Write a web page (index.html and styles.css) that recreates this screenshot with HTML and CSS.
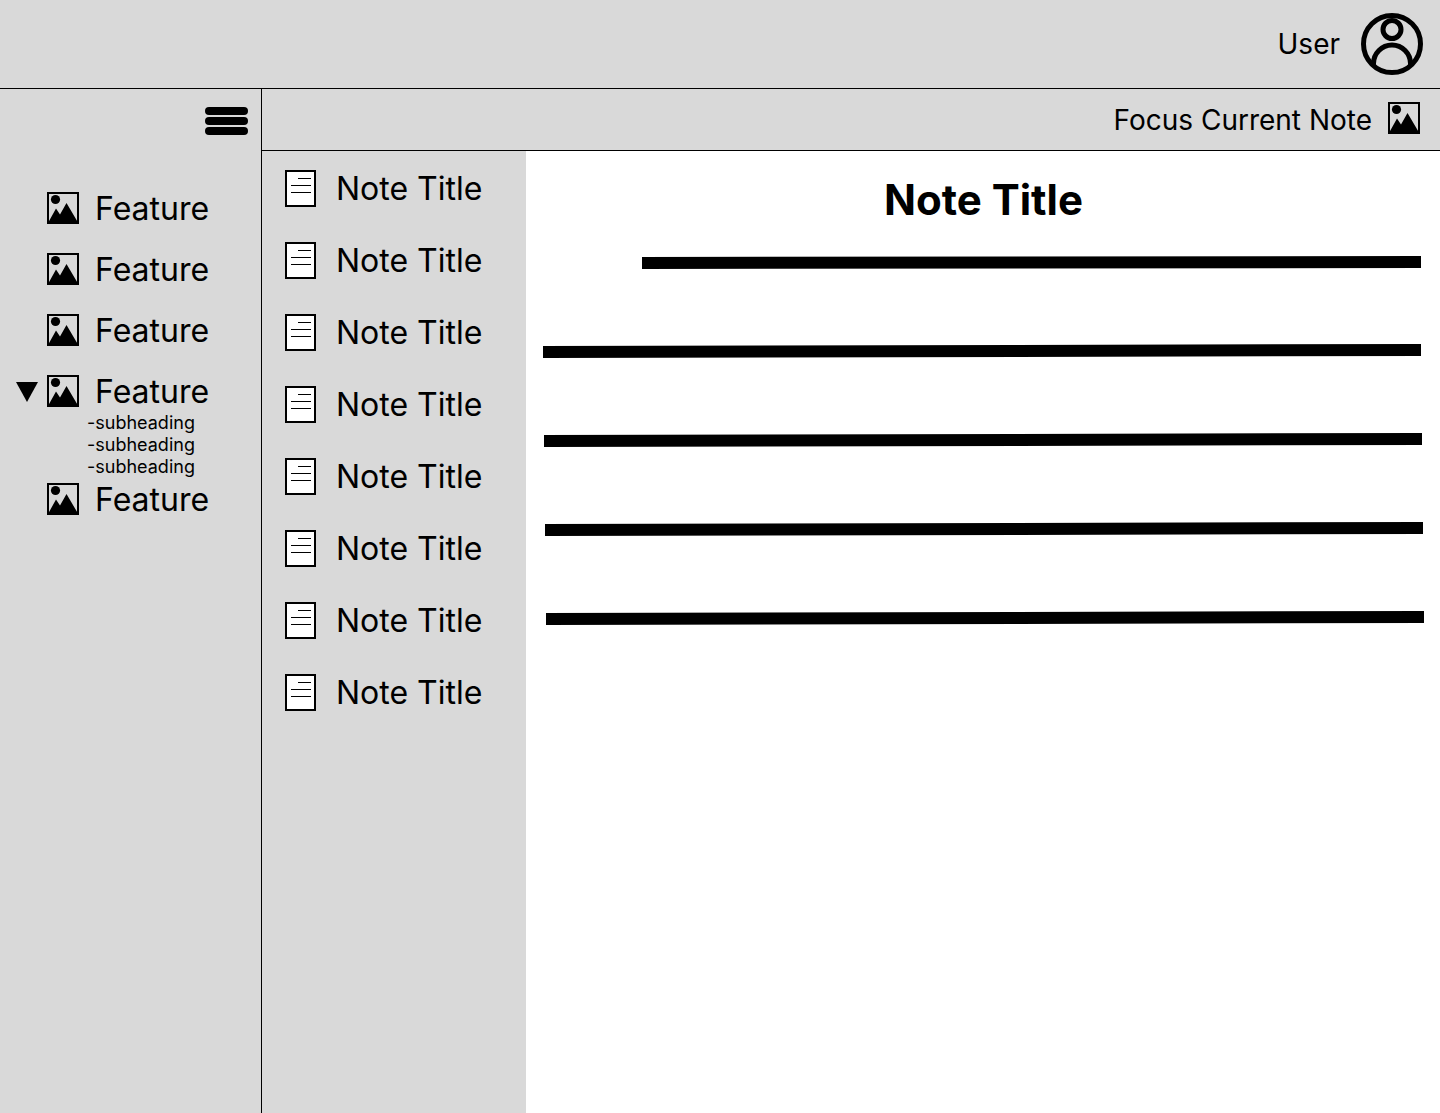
FILE: index.html
```html
<!DOCTYPE html>
<html lang="en">
<head>
<meta charset="utf-8">
<meta name="viewport" content="width=device-width, initial-scale=1">
<title>Notes</title>
<link rel="stylesheet" href="styles.css">
</head>
<body>
<svg class="symbols" aria-hidden="true">
  <symbol id="picture" viewBox="0 0 32 32">
    <rect x="1" y="1" width="30" height="30" fill="none" stroke="#000" stroke-width="2"/>
    <circle cx="8.500" cy="7.500" r="4.600"/>
    <path d="M1.500 30 9 16.500l4 6L19.500 11 31 30.500z"/>
  </symbol>
  <symbol id="page" viewBox="0 0 31 37">
    <rect x="1" y="1" width="29" height="35" fill="#fff" stroke="#000" stroke-width="2"/>
    <path d="M13 8.500h13M6 15.500h20M6 22.500h20" fill="none" stroke="#000"/>
  </symbol>
</svg>
<header class="topbar">
  <a class="user" href="#user">User
    <svg class="avatar" viewBox="0 0 62 62" aria-hidden="true" fill="none" stroke="#000" stroke-width="5">
      <circle cx="31" cy="31" r="28.500"/>
      <circle cx="31" cy="16.500" r="9"/>
      <path d="M12.500 53v-2.500a18.500 18.500 0 0 1 37 0V53"/>
    </svg>
  </a>
</header>
<div class="workspace">
  <nav class="sidebar" aria-label="Features">
    <button class="menu" type="button" aria-label="Menu"><span class="bar"></span><span class="bar"></span><span class="bar"></span></button>
    <ul class="features">
      <li><a class="feature" href="#f1"><svg class="picture"><use href="#picture"/></svg>Feature</a></li>
      <li><a class="feature" href="#f2"><svg class="picture"><use href="#picture"/></svg>Feature</a></li>
      <li><a class="feature" href="#f3"><svg class="picture"><use href="#picture"/></svg>Feature</a></li>
      <li class="open">
        <div class="row">
          <button class="toggle" type="button" aria-label="Collapse" aria-expanded="true"><svg class="arrow" viewBox="0 0 22 20"><path d="M0 0h22L11 20z"/></svg></button>
          <a class="feature" href="#f4"><svg class="picture"><use href="#picture"/></svg>Feature</a>
        </div>
        <ul class="subheadings">
          <li><a href="#s1">-subheading</a></li>
          <li><a href="#s2">-subheading</a></li>
          <li><a href="#s3">-subheading</a></li>
        </ul>
      </li>
      <li><a class="feature" href="#f5"><svg class="picture"><use href="#picture"/></svg>Feature</a></li>
    </ul>
  </nav>
  <div class="content">
    <div class="toolbar">
      <button class="focus" type="button">Focus Current Note<svg class="picture"><use href="#picture"/></svg></button>
    </div>
    <div class="panes">
      <ul class="notes">
        <li><a class="note" href="#n1"><svg class="page"><use href="#page"/></svg>Note Title</a></li>
        <li><a class="note" href="#n2"><svg class="page"><use href="#page"/></svg>Note Title</a></li>
        <li><a class="note" href="#n3"><svg class="page"><use href="#page"/></svg>Note Title</a></li>
        <li><a class="note" href="#n4"><svg class="page"><use href="#page"/></svg>Note Title</a></li>
        <li><a class="note" href="#n5"><svg class="page"><use href="#page"/></svg>Note Title</a></li>
        <li><a class="note" href="#n6"><svg class="page"><use href="#page"/></svg>Note Title</a></li>
        <li><a class="note" href="#n7"><svg class="page"><use href="#page"/></svg>Note Title</a></li>
        <li><a class="note" href="#n8"><svg class="page"><use href="#page"/></svg>Note Title</a></li>
      </ul>
      <main class="editor">
        <h1 class="title">Note Title</h1>
        <svg class="lines" viewBox="0 0 881 369" preserveAspectRatio="none" role="img" aria-label="Note text">
          <path d="M99 1 878 0v12L99 13zM0 90l878-2v12L0 102zM1 179l878-2v12L1 191zM2 268l878-2v12L2 280zM3 357l878-2v12L3 369z"/>
        </svg>
      </main>
    </div>
  </div>
</div>
</body>
</html>
```
FILE: styles.css
```css
* {
  box-sizing: border-box;
}

body {
  display: flex;
  flex-direction: column;
  min-height: 100vh;
  margin: 0;
  background: #d9d9d9;
  color: #000;
  font-family: Inter, "Liberation Sans", sans-serif;
}

a {
  color: inherit;
  text-decoration: none;
}

ul {
  margin: 0;
  padding: 0;
  list-style: none;
}

button {
  padding: 0;
  border: 0;
  background: none;
  color: inherit;
  font: inherit;
  cursor: pointer;
}

svg {
  display: block;
  flex: none;
}

.symbols {
  display: none;
}

.topbar {
  display: flex;
  justify-content: flex-end;
  padding: 13px 17px;
  border-bottom: 1px solid #000;
}

.user {
  display: flex;
  align-items: center;
  gap: 21px;
  font-size: 28px;
  line-height: 36px;
}

.avatar {
  width: 62px;
  height: 62px;
}

.workspace {
  display: flex;
  flex: 1;
}

.sidebar {
  display: flex;
  flex: none;
  flex-direction: column;
  gap: 54px;
  width: 262px;
  padding-top: 18px;
  border-right: 1px solid #000;
}

.menu {
  display: flex;
  flex-direction: column;
  align-self: flex-end;
  gap: 2px;
  width: 43px;
  margin-right: 13px;
}

.bar {
  height: 8px;
  border-radius: 4px;
  background: #000;
}

.features {
  display: flex;
  flex-direction: column;
  gap: 21px;
  padding-left: 47px;
}

.feature {
  display: flex;
  align-items: center;
  gap: 16px;
  font-size: 32px;
  line-height: 40px;
}

.picture {
  width: 32px;
  height: 32px;
  margin-bottom: 2px;
}

.open {
  margin: 0 0 -19px -31px;
}

.row {
  display: flex;
  align-items: center;
  gap: 9px;
}

.arrow {
  width: 22px;
  height: 20px;
}

.subheadings {
  padding-left: 71px;
  font-size: 18px;
  line-height: 22px;
}

.content {
  display: flex;
  flex: 1;
  flex-direction: column;
  min-width: 0;
}

.toolbar {
  display: flex;
  justify-content: flex-end;
  padding: 13px 20px 12px;
  border-bottom: 1px solid #000;
}

.focus {
  display: flex;
  align-items: flex-start;
  gap: 16px;
  font-size: 28px;
  line-height: 36px;
}

.panes {
  display: flex;
  flex: 1;
}

.notes {
  display: flex;
  flex: none;
  flex-direction: column;
  gap: 32px;
  width: 264px;
  padding: 18px 0 18px 23px;
}

.note {
  display: flex;
  align-items: center;
  gap: 20px;
  font-size: 32px;
  line-height: 40px;
}

.page {
  width: 31px;
  height: 37px;
  margin-bottom: 1px;
}

.editor {
  flex: 1;
  min-width: 0;
  padding: 23px 16px 23px 17px;
  background: #fff;
}

.title {
  margin: 0 0 30px;
  font-size: 42px;
  font-weight: 700;
  line-height: 52px;
  text-align: center;
}

.lines {
  width: 100%;
  height: 369px;
}
```
